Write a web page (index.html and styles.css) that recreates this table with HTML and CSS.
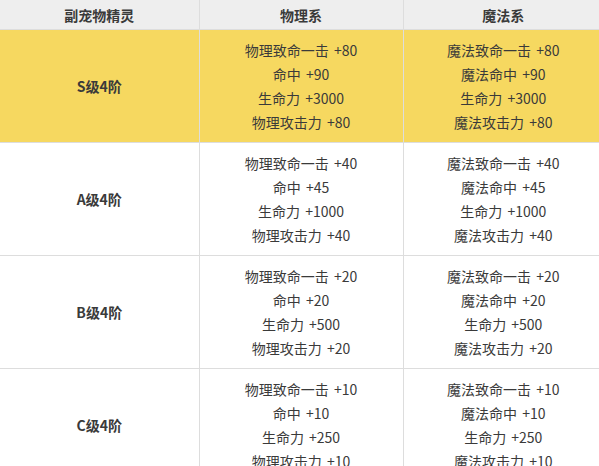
FILE: index.html
```html
<!DOCTYPE html>
<html lang="zh">
<head>
<meta charset="utf-8">
<link rel="stylesheet" href="styles.css">
</head>
<body>
<table class="pet-table">
  <colgroup>
    <col class="c1"><col class="c2"><col class="c3">
  </colgroup>
  <thead>
    <tr><th>副宠物精灵</th><th>物理系</th><th>魔法系</th></tr>
  </thead>
  <tbody>
    <tr class="hl">
      <td class="grade">S级4阶</td>
      <td><p>物理致命一击 +80</p><p>命中 +90</p><p>生命力 +3000</p><p>物理攻击力 +80</p></td>
      <td><p>魔法致命一击 +80</p><p>魔法命中 +90</p><p>生命力 +3000</p><p>魔法攻击力 +80</p></td>
    </tr>
    <tr>
      <td class="grade">A级4阶</td>
      <td><p>物理致命一击 +40</p><p>命中 +45</p><p>生命力 +1000</p><p>物理攻击力 +40</p></td>
      <td><p>魔法致命一击 +40</p><p>魔法命中 +45</p><p>生命力 +1000</p><p>魔法攻击力 +40</p></td>
    </tr>
    <tr>
      <td class="grade">B级4阶</td>
      <td><p>物理致命一击 +20</p><p>命中 +20</p><p>生命力 +500</p><p>物理攻击力 +20</p></td>
      <td><p>魔法致命一击 +20</p><p>魔法命中 +20</p><p>生命力 +500</p><p>魔法攻击力 +20</p></td>
    </tr>
    <tr>
      <td class="grade">C级4阶</td>
      <td><p>物理致命一击 +10</p><p>命中 +10</p><p>生命力 +250</p><p>物理攻击力 +10</p></td>
      <td><p>魔法致命一击 +10</p><p>魔法命中 +10</p><p>生命力 +250</p><p>魔法攻击力 +10</p></td>
    </tr>
  </tbody>
</table>
</body>
</html>
```
FILE: styles.css
```css
html, body {
  margin: 0;
  padding: 0;
  background: #ffffff;
}
body {
  font-family: "Noto Sans CJK SC", "Microsoft YaHei", sans-serif;
  color: #3a3a3a;
  font-size: 14px;
}
.pet-table {
  border-collapse: collapse;
  table-layout: fixed;
  width: 603px;
}
.c1 { width: 199px; }
.c2 { width: 204px; }
.c3 { width: 200px; }
.pet-table th {
  height: 29px;
  padding: 0;
  background: #eeeeee;
  font-weight: bold;
  font-size: 14px;
  color: #3a3a3a;
  border-bottom: 1px solid #dddddd;
  border-left: 1px solid #dddddd;
  text-align: center;
  vertical-align: middle;
}
.pet-table th:first-child { border-left: none; }
.pet-table td {
  padding: 8px 0;
  text-align: center;
  vertical-align: middle;
  border-bottom: 1px solid #dddddd;
  border-left: 1px solid #dddddd;
}
.pet-table td:first-child { border-left: none; }
.pet-table td p {
  margin: 0;
  line-height: 24px;
  height: 24px;
  word-spacing: 2px;
}
.pet-table .grade {
  font-weight: bold;
  font-size: 14px;
}
.pet-table tr.hl td {
  background: #f6d860;
}
```
